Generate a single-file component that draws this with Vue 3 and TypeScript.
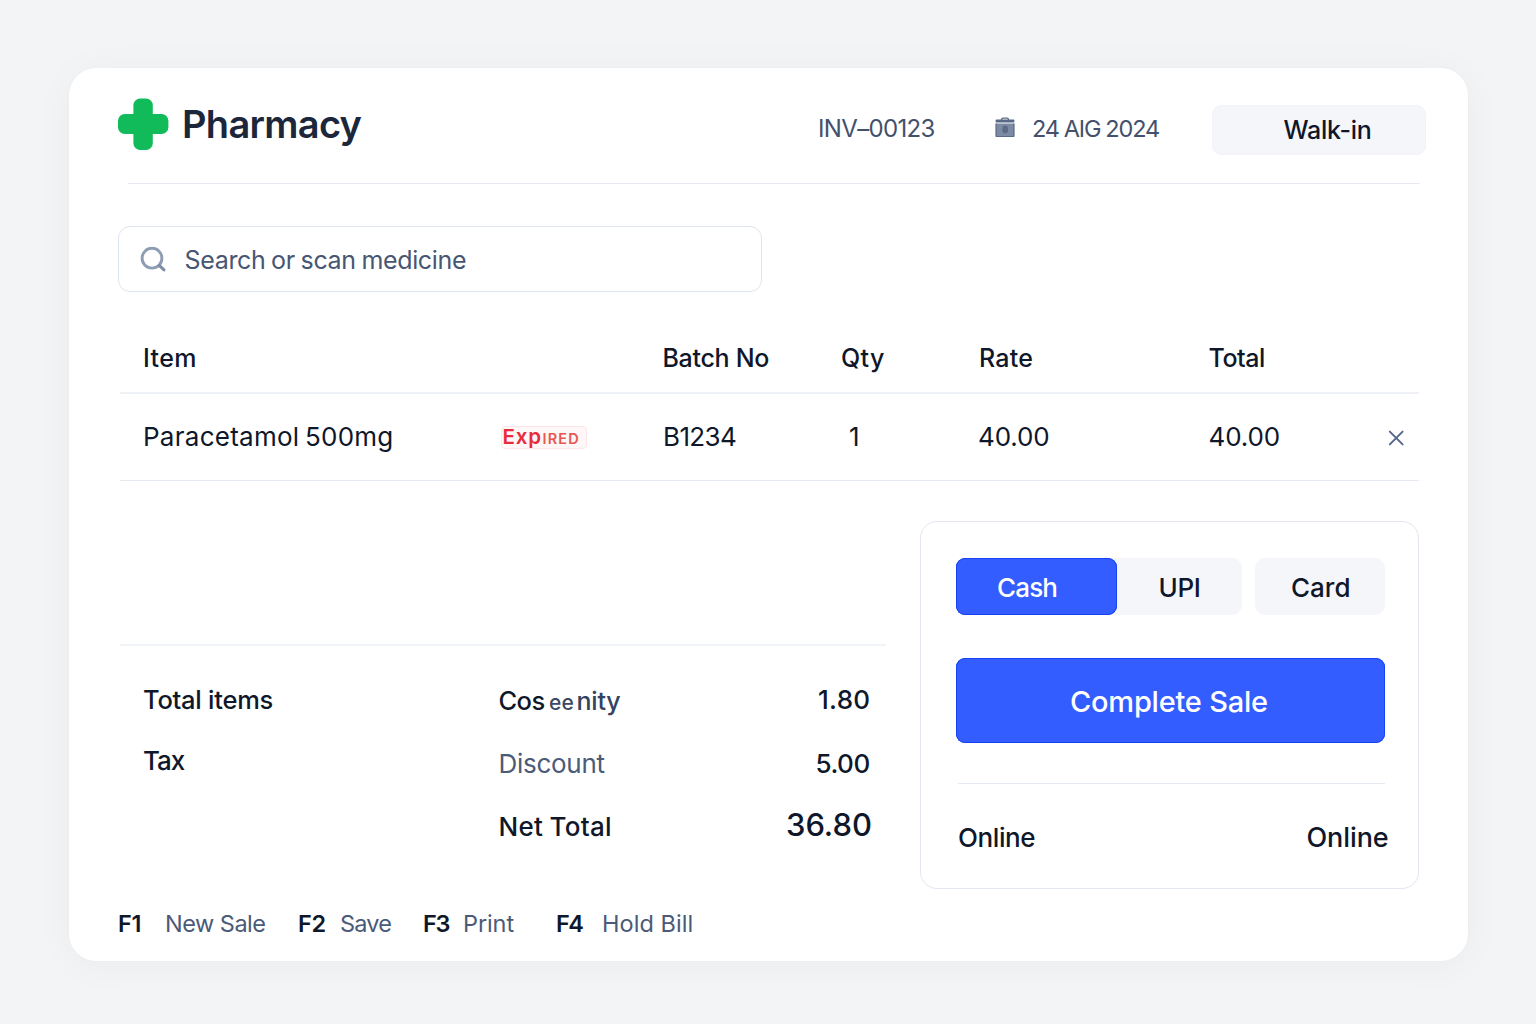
<script setup lang="ts">
interface Column {
  key: string
  label: string
}

interface Shortcut {
  key: string
  label: string
}

const columns: Column[] = [
  { key: 'item', label: 'Item' },
  { key: 'status', label: '' },
  { key: 'batch', label: 'Batch No' },
  { key: 'qty', label: 'Qty' },
  { key: 'rate', label: 'Rate' },
  { key: 'total', label: 'Total' },
  { key: 'remove', label: '' },
]

const shortcuts: Shortcut[] = [
  { key: 'F1', label: 'New Sale' },
  { key: 'F2', label: 'Save' },
  { key: 'F3', label: 'Print' },
  { key: 'F4', label: 'Hold Bill' },
]
</script>

<template>
  <div class="page">
    <main class="card">
      <header class="header">
        <svg class="logo" viewBox="0 0 51 52" width="51" height="52">
          <rect x="15.4" y="0.5" width="19.4" height="51.4" rx="6.8" fill="#12bb5a" />
          <rect x="0" y="16" width="50.4" height="20" rx="6.8" fill="#12bb5a" />
        </svg>
        <h1 class="brand">Pharmacy</h1>
        <span class="invoice">INV–00123</span>
        <svg class="calendar" viewBox="0 0 20 21" width="20" height="21">
          <path d="M6.6 3.2V2.3Q6.6 1.1 8 1.1H12Q13.4 1.1 13.4 2.3V3.2" fill="none" stroke="#5a6a86" stroke-width="1.3" />
          <rect x="0.6" y="2.6" width="18.8" height="2.9" rx="0.8" fill="#5a6a86" />
          <rect x="0.6" y="6.4" width="18.8" height="13.6" rx="0.8" fill="#7c8aa4" />
          <path d="M1.1 6.4V19.5H18.9V6.4" fill="none" stroke="#5a6a86" stroke-width="1" />
          <ellipse cx="10.2" cy="12.4" rx="2.9" ry="3.9" fill="#5b6b87" />
        </svg>
        <span class="date">24 AIG 2024</span>
        <button class="customer">Walk-in</button>
      </header>
      <div class="header-rule"></div>

      <label class="search">
        <svg viewBox="0 0 28 28" width="28" height="28" fill="none" stroke="#8f9db3" stroke-width="2.9" stroke-linecap="round">
          <circle cx="12" cy="13.2" r="9.9" />
          <path d="M19.4 20.6L24 24.9" stroke="#7d8ba3" />
        </svg>
        <span class="placeholder">Search or scan medicine</span>
      </label>

      <section class="table">
        <div class="row head">
          <span v-for="c in columns" :key="c.key" :class="'h-' + c.key">{{ c.label }}</span>
        </div>
        <div class="row line">
          <span class="c-item">Paracetamol 500mg</span>
          <span class="c-status"><span class="badge"><span class="exp">Exp</span><span class="ired">IRED</span></span></span>
          <span class="c-batch">B1234</span>
          <span class="c-qty">1</span>
          <span class="c-rate">40.00</span>
          <span class="c-total">40.00</span>
          <svg class="remove" viewBox="0 0 16 16" width="16" height="16" fill="none" stroke="#54658a" stroke-width="1.9" stroke-linecap="round">
            <path d="M1.8 1.6L14.6 14.4M14.6 1.6L1.8 14.4" />
          </svg>
        </div>
      </section>

      <section class="lower">
        <div class="summary">
          <div class="stack labels">
            <span class="total-items">Total items</span>
            <span class="tax">Tax</span>
          </div>
          <div class="stack mid">
            <span class="split"><span class="cos">Cos</span><span class="ee">ee</span><span class="nity">nity</span></span>
            <span class="discount">Discount</span>
            <span class="net">Net Total</span>
          </div>
          <div class="stack values">
            <span class="v1">1.80</span>
            <span class="v2">5.00</span>
            <span class="v3">36.80</span>
          </div>
        </div>

        <aside class="payment">
          <div class="methods">
            <div class="joined">
              <button class="method cash">Cash</button>
              <button class="method upi">UPI</button>
            </div>
            <button class="method bank">Card</button>
          </div>
          <button class="complete">Complete Sale</button>
          <div class="status">
            <span class="on-left">Online</span>
            <span class="on-right">Online</span>
          </div>
        </aside>
      </section>

      <footer class="shortcuts">
        <span v-for="s in shortcuts" :key="s.key" class="shortcut" :class="s.key.toLowerCase()">
          <kbd>{{ s.key }}</kbd><span class="action">{{ s.label }}</span>
        </span>
      </footer>
    </main>
  </div>
</template>

<style>
body {
  background: #f3f4f6;
}
</style>

<style scoped>
.page {
  box-sizing: border-box;
  width: 1536px;
  height: 1024px;
  padding: 68px 68px 63px 69px;
  overflow: hidden;
  background: #f3f4f6;
  color: #0f172a;
  font-family: Inter, 'Liberation Sans', sans-serif;
  font-size: 26px;
  line-height: 40px;
  white-space: nowrap;
}

.card {
  box-sizing: border-box;
  display: flex;
  flex-direction: column;
  width: 1399px;
  height: 893px;
  border-radius: 27px;
  background: #fff;
  box-shadow: 0 0 2px rgba(30, 41, 59, 0.04), 0 4px 40px rgba(30, 41, 59, 0.04);
}

button {
  padding: 0;
  border: 0;
  color: inherit;
  font: inherit;
  text-align: left;
}

.header {
  display: grid;
  grid-template-columns: 64px 636px 176.5px 37.5px 180px 214px;
  align-items: start;
  height: 115px;
  margin-left: 49px;
}

.logo {
  margin-top: 30px;
}

.brand {
  margin: 36px 0 0;
  color: #1c273b;
  font-size: 38px;
  font-weight: 600;
  letter-spacing: -0.7px;
}

.invoice,
.date {
  margin-top: 41px;
  color: #43516c;
  font-size: 24px;
  letter-spacing: -0.65px;
}

.date {
  font-size: 23.5px;
  letter-spacing: -1.15px;
  word-spacing: -0.5px;
}

.calendar {
  margin-top: 49px;
}

.customer {
  height: 50px;
  margin-top: 37px;
  padding: 0 0 0 71.5px;
  border-radius: 10px;
  background: #f5f6fa;
  box-shadow: inset 0 0 0 1px #f1f3f8;
  font-size: 25px;
  font-weight: 500;
  letter-spacing: -0.25px;
}

.header-rule {
  height: 1px;
  margin: 0 48px 0 59px;
  background: #e7eaf2;
}

.search {
  box-sizing: border-box;
  display: flex;
  align-items: center;
  width: 644px;
  height: 66px;
  margin: 42px 0 0 49px;
  padding-left: 21px;
  border: 1px solid #dfe5ef;
  border-radius: 12px;
}

.placeholder {
  margin: 2px 0 0 16.5px;
  color: #475673;
  font-size: 25px;
  letter-spacing: -0.34px;
  word-spacing: -1px;
}

.table {
  margin: 31px 49px 0 51px;
}

.row {
  display: grid;
  grid-template-columns: 357.5px 162px 178.5px 137px 230.5px 179px 1fr;
  align-items: center;
  box-sizing: border-box;
  padding-left: 23px;
}

.head {
  height: 71px;
  border-bottom: 2px solid #eef2f7;
  font-size: 25px;
  font-weight: 500;
}

.h-item {
  letter-spacing: 0.35px;
}

.h-batch {
  letter-spacing: -0.3px;
}

.h-qty {
  letter-spacing: 0.38px;
}

.h-rate {
  padding-left: 1px;
  letter-spacing: 0.2px;
}

.h-total {
  letter-spacing: -0.45px;
}

.line {
  height: 87px;
  border-bottom: 1px solid #e5eaf3;
}

.c-item {
  letter-spacing: 0.26px;
  word-spacing: -2px;
}

.c-batch {
  padding-left: 0.5px;
  letter-spacing: -0.63px;
}

.c-qty {
  padding-left: 8px;
}

.c-rate,
.c-total {
  letter-spacing: -0.1px;
}

.c-status {
  display: flex;
}

.badge {
  box-sizing: border-box;
  display: flex;
  align-items: baseline;
  width: 86px;
  height: 23px;
  margin-top: 1px;
  padding-left: 1px;
  border: 1px solid #fce6e8;
  border-radius: 4px;
  background: #fef7f7;
  line-height: 19px;
}

.exp {
  width: 40px;
  color: #e92c3d;
  font-size: 20.5px;
  font-weight: 600;
  letter-spacing: 0.9px;
}

.ired {
  color: #e8574f;
  font-size: 14.5px;
  font-weight: 600;
  letter-spacing: 1.2px;
}

.remove {
  margin-top: 2px;
}

.lower {
  display: flex;
  justify-content: space-between;
  margin: 40px 49px 0 51px;
}

.summary {
  display: flex;
  align-items: flex-start;
  box-sizing: border-box;
  width: 766px;
  height: 244px;
  margin-top: 123px;
  padding: 34px 0 0 23px;
  border-top: 2px solid #f0f3f8;
}

.stack {
  display: flex;
  flex-direction: column;
  font-weight: 500;
}

.labels {
  width: 355.5px;
  gap: 20.5px;
}

.mid {
  width: 287.5px;
  padding-top: 1px;
  gap: 23px;
}

.total-items {
  font-size: 25.5px;
  letter-spacing: -0.25px;
}

.tax {
  letter-spacing: -1px;
}

.split {
  display: flex;
  align-items: baseline;
  height: 40px;
}

.cos {
  width: 50.5px;
  font-size: 25.5px;
  letter-spacing: -0.6px;
}

.ee {
  width: 27.5px;
  color: #3b4963;
  font-size: 21px;
  letter-spacing: 0.2px;
}

.nity {
  color: #334360;
  font-size: 25px;
  letter-spacing: -0.2px;
}

.discount {
  color: #4b5b78;
  font-weight: 400;
  letter-spacing: -0.28px;
}

.net {
  letter-spacing: 0.3px;
  word-spacing: -1px;
}

.values {
  gap: 23.5px;
}

.v1 {
  padding-left: 32px;
  letter-spacing: 0.3px;
}

.v2 {
  padding-left: 29.5px;
  letter-spacing: -0.5px;
}

.v3 {
  margin-top: -2.5px;
  font-size: 31px;
  letter-spacing: -0.05px;
}

.payment {
  box-sizing: border-box;
  display: flex;
  flex-direction: column;
  width: 499px;
  height: 368px;
  padding: 36px 33px 0 35px;
  border: 1px solid #e2e6f1;
  border-radius: 17px;
}

.methods {
  display: flex;
  gap: 13px;
  height: 57px;
}

.joined {
  display: flex;
  width: 286px;
  border-radius: 10px;
  background: #f5f6fa;
}

.method {
  background: #f5f6fa;
  border-radius: 10px;
  font-weight: 500;
}

.cash {
  width: 161px;
  padding: 3px 0 0 41px;
  border-radius: 9px;
  background: #335dff;
  box-shadow: inset 0 0 0 1px #1641f5;
  color: #fff;
  letter-spacing: -0.85px;
}

.upi {
  width: 125px;
  padding: 3px 0 0 41.5px;
  letter-spacing: -0.3px;
}

.bank {
  width: 130px;
  padding: 3px 0 0 36px;
}

.complete {
  flex: none;
  height: 85px;
  margin-top: 43px;
  padding: 2px 0 0 114px;
  border-radius: 9px;
  background: #335dff;
  box-shadow: inset 0 0 0 1px #1641f5;
  color: #fff;
  font-size: 29px;
  font-weight: 500;
  letter-spacing: -0.22px;
}

.status {
  display: flex;
  margin: 40px 0 0 2px;
  padding-top: 34px;
  border-top: 1px solid #e5e9f2;
  font-weight: 500;
}

.on-left {
  flex: none;
  width: 348.5px;
  letter-spacing: -0.4px;
}

.on-right {
  font-size: 27px;
  letter-spacing: -0.1px;
}

.shortcuts {
  display: flex;
  margin: 15px 0 0 49px;
  font-size: 23.5px;
}

.shortcut {
  display: flex;
}

kbd {
  font-family: inherit;
  font-weight: 600;
  letter-spacing: -1.2px;
}

.action {
  color: #4a5a78;
}

.f1 {
  width: 180px;
}

.f1 kbd {
  width: 47px;
  letter-spacing: -0.3px;
}

.f1 .action {
  letter-spacing: -0.5px;
}

.f2 {
  width: 125px;
}

.f2 kbd {
  width: 42px;
  letter-spacing: -0.3px;
}

.f2 .action {
  letter-spacing: -0.79px;
}

.f3 {
  width: 133px;
}

.f3 kbd {
  width: 40px;
}

.f3 .action {
  letter-spacing: -0.1px;
}

.f4 kbd {
  width: 46px;
  letter-spacing: -1.5px;
}

.f4 .action {
  letter-spacing: 0.05px;
}
</style>
